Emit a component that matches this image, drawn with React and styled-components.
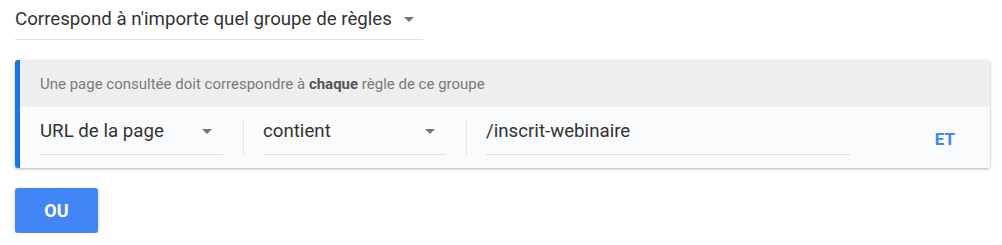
import React from "react";
import styled, { createGlobalStyle } from "styled-components";

const GlobalStyle = createGlobalStyle`
  body {
    margin: 0;
    background: #ffffff;
    font-family: Roboto, "Noto Sans", Arial, sans-serif;
  }
`;

const Page = styled.div`
  padding: 7px 0 0 15px;
`;

const Select = styled.div`
  display: flex;
  align-items: center;
  justify-content: space-between;
  width: ${(p) => p.width}px;
  box-sizing: border-box;
  padding: 0 ${(p) => p.arrowGap}px ${(p) => p.bottom}px 0;
  border-bottom: 1px solid #e0e0e0;
  font-size: 18.7px;
  line-height: 24px;
  color: #333333;
  span {
    white-space: nowrap;
  }
`;

const Arrow = styled.i`
  width: 0;
  height: 0;
  border-left: 5px solid transparent;
  border-right: 5px solid transparent;
  border-top: 5px solid #757575;
  margin-top: 1px;
`;

const Card = styled.div`
  margin-top: 20px;
  width: 975px;
  box-sizing: border-box;
  border-left: 5px solid #1a73e8;
  border-radius: 3px;
  box-shadow: 0 1px 3px rgba(0, 0, 0, 0.3);
  overflow: hidden;
`;

const Header = styled.div`
  height: 47px;
  background: #eeeeee;
  padding-left: 20px;
  display: flex;
  align-items: center;
  font-size: 15px;
  color: #7a7a7a;
  b {
    color: #555555;
    font-weight: 700;
  }
`;

const Body = styled.div`
  background: #fafbfc;
  display: flex;
  align-items: flex-start;
  padding: 12px 35px 13px 20px;
`;

const Divider = styled.div`
  width: 1px;
  height: 35px;
  background: #e6e6e6;
  margin: 1px 19px 0 20px;
`;

const AndLink = styled.div`
  margin-left: auto;
  align-self: center;
  margin-top: 4px;
  font-size: 17px;
  font-weight: 700;
  color: #4285f4;
`;

const OrButton = styled.button`
  margin-top: 20px;
  width: 83px;
  height: 45px;
  border: none;
  border-radius: 3px;
  background: #4285f4;
  box-shadow: 0 1px 3px rgba(0, 0, 0, 0.25);
  color: #ffffff;
  font-family: Roboto, "Noto Sans", Arial, sans-serif;
  font-size: 18px;
  font-weight: 700;
  cursor: pointer;
`;

const Field = ({ label, width, arrow }) => (
  <Select width={width} bottom={11} arrowGap={11}>
    <span>{label}</span>
    {arrow && <Arrow />}
  </Select>
);

export default function App() {
  return (
    <Page>
      <GlobalStyle />
      <Select width={408} bottom={8} arrowGap={9}>
        <span>Correspond à n'importe quel groupe de règles</span>
        <Arrow />
      </Select>
      <Card>
        <Header>
          <span>
            Une page consultée doit correspondre à <b>chaque</b> règle de ce groupe
          </span>
        </Header>
        <Body>
          <Field label="URL de la page" width={183} arrow />
          <Divider />
          <Field label="contient" width={183} arrow />
          <Divider />
          <Field label="/inscrit-webinaire" width={364} />
          <AndLink>ET</AndLink>
        </Body>
      </Card>
      <OrButton>OU</OrButton>
    </Page>
  );
}
